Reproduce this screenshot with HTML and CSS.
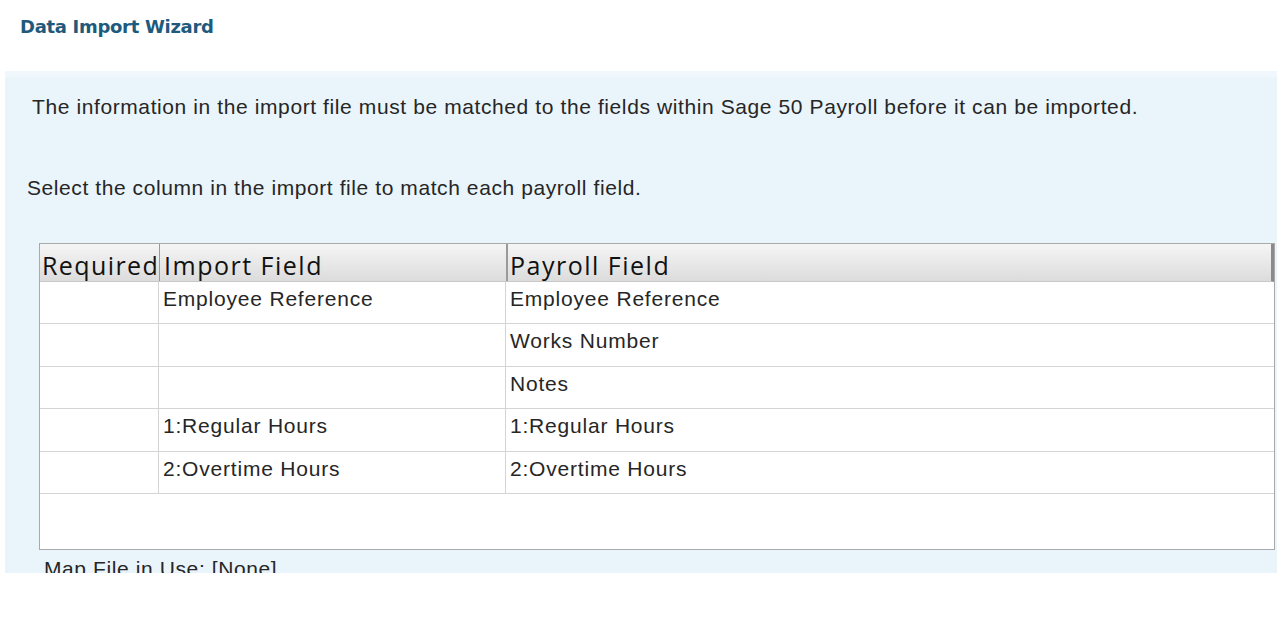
FILE: index.html
```html
<!DOCTYPE html>
<html>
<head>
<meta charset="utf-8">
<link rel="stylesheet" href="styles.css">
</head>
<body>
<div class="page">
  <h1 class="title">Data Import Wizard</h1>
  <div class="panel">
    <p class="intro">The information in the import file must be matched to the fields within Sage 50 Payroll before it can be imported.</p>
    <p class="select">Select the column in the import file to match each payroll field.</p>
    <div class="grid">
      <div class="row head">
        <div class="c c1">Required</div>
        <div class="c c2">Import Field</div>
        <div class="c c3">Payroll Field</div>
      </div>
      <div class="row r42">
        <div class="c c1"></div>
        <div class="c c2">Employee Reference</div>
        <div class="c c3">Employee Reference</div>
      </div>
      <div class="row r43">
        <div class="c c1"></div>
        <div class="c c2"></div>
        <div class="c c3">Works Number</div>
      </div>
      <div class="row r42">
        <div class="c c1"></div>
        <div class="c c2"></div>
        <div class="c c3">Notes</div>
      </div>
      <div class="row r43">
        <div class="c c1"></div>
        <div class="c c2">1:Regular Hours</div>
        <div class="c c3">1:Regular Hours</div>
      </div>
      <div class="row r42">
        <div class="c c1"></div>
        <div class="c c2">2:Overtime Hours</div>
        <div class="c c3">2:Overtime Hours</div>
      </div>
      <div class="filler"></div>
    </div>
    <div class="mapfile">Map File in Use: [None]</div>
  </div>
</div>
</body>
</html>
```
FILE: styles.css
```css
html, body {
  margin: 0;
  padding: 0;
  background: #ffffff;
}
.page {
  width: 1277px;
  height: 629px;
  overflow: hidden;
}
.title {
  margin: 0;
  padding: 16px 0 0 20px;
  height: 71px;
  box-sizing: border-box;
  font-family: "DejaVu Sans", Verdana, sans-serif;
  font-weight: bold;
  font-size: 18px;
  line-height: 22px;
  color: #1e5a7c;
  letter-spacing: -0.3px;
}
.panel {
  margin-left: 5px;
  height: 502px;
  overflow: hidden;
  background: linear-gradient(#f1f8fd 0, #f1f8fd 5px, #eaf4fb 7px, #eaf4fb 100%);
  box-sizing: border-box;
  font-family: "Liberation Sans", Arial, sans-serif;
  color: #262626;
}
.intro {
  margin: 0;
  padding: 24px 0 0 27px;
  font-size: 21px;
  line-height: 24px;
  letter-spacing: 0.6px;
}
.select {
  margin: 0;
  padding: 57px 0 0 22px;
  font-size: 21px;
  line-height: 24px;
  letter-spacing: 0.58px;
}
.grid {
  margin: 43px 0 0 34px;
  width: 1236px;
  height: 307px;
  box-sizing: border-box;
  border: 1px solid #a9a9a9;
  background: #ffffff;
  display: flex;
  flex-direction: column;
}
.row {
  display: flex;
  flex: none;
  border-bottom: 1px solid #d4d4d4;
  box-sizing: border-box;
}
.r42 { height: 42px; }
.r43 { height: 43px; }
.row.head {
  height: 38px;
  background: linear-gradient(#f5f5f5, #dcdcdc);
  border-bottom: 1px solid #c8c8c8;
  border-right: 3px solid #8a8a8a;
}
.c {
  box-sizing: border-box;
  font-size: 21px;
  line-height: 24px;
  padding: 5px 0 0 4px;
  letter-spacing: 0.8px;
  color: #262626;
}
.c1 { width: 119px; border-right: 1px solid #d4d4d4; }
.c2 { width: 347px; border-right: 1px solid #d4d4d4; }
.c3 { flex: 1; }
.head .c {
  font-family: "Open Sans", "Noto Sans", sans-serif;
  font-size: 25px;
  line-height: 30px;
  letter-spacing: 1.5px;
  padding: 6px 0 0 4px;
  color: #111111;
  border-right: none;
  white-space: nowrap;
}
.head .c1 { padding-left: 2px; letter-spacing: 1.4px; }
.head .c2 { border-left: 1px solid #9a9a9a; }
.head .c3 { border-left: 2px solid #9a9a9a; padding-left: 2px; }
.filler {
  flex: 1;
}
.mapfile {
  padding: 7px 0 0 39px;
  font-size: 21px;
  line-height: 24px;
  letter-spacing: 0.6px;
}
```
